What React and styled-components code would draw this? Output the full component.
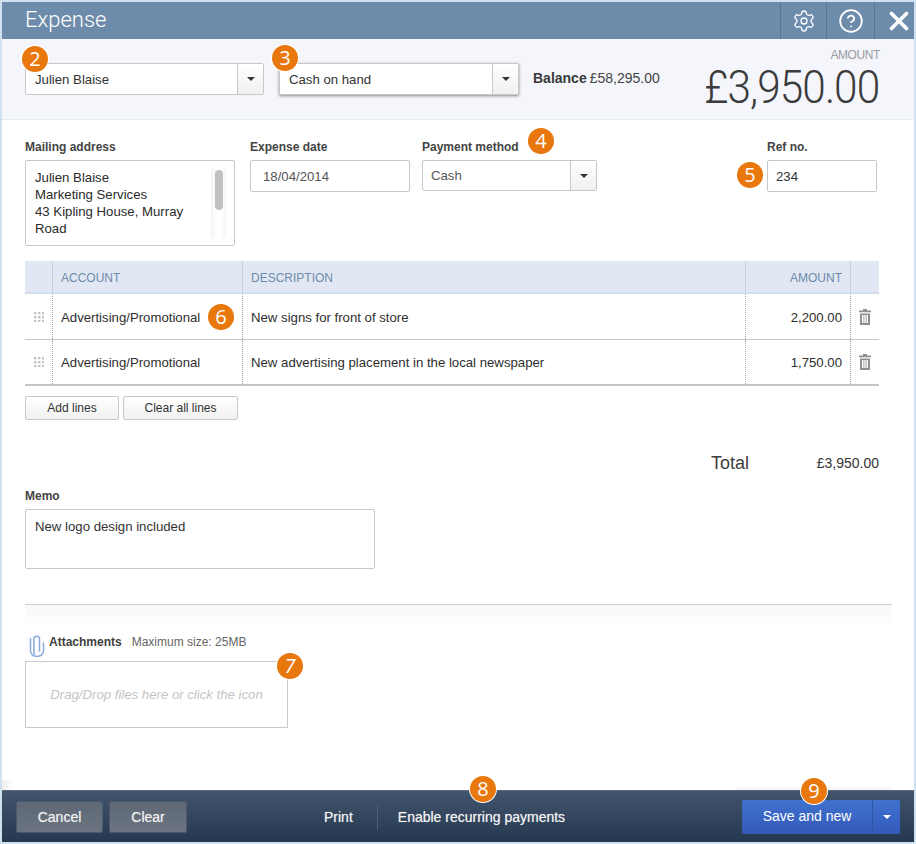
import React from "react";
import styled, { createGlobalStyle } from "styled-components";
import { Settings, CircleHelp, X } from "lucide-react";

const GlobalStyle = createGlobalStyle`
  html, body {
    margin: 0;
    padding: 0;
    background: #cfe0f1;
  }
  * {
    box-sizing: border-box;
  }
`;

const Page = styled.div`
  width: 916px;
  height: 844px;
  padding: 2px;
  background: #cfe0f1;
  display: flex;
  flex-direction: column;
  font-family: "Liberation Sans", Arial, sans-serif;
  font-size: 13.2px;
  color: #333;
  overflow: hidden;
`;

const Header = styled.header`
  height: 37px;
  flex: none;
  display: flex;
  align-items: stretch;
  background: #6d8baa;
  color: #fff;
  padding-left: 23px;
`;

const Title = styled.h1`
  margin: 0;
  flex: 1;
  font-family: Roboto, sans-serif;
  font-weight: 300;
  font-size: 22px;
  line-height: 36px;
  color: #fff;
`;

const HeaderIcon = styled.div`
  width: ${(p) => p.$w}px;
  padding-left: ${(p) => p.$pl || 0}px;
  display: flex;
  align-items: center;
  justify-content: center;
  border-left: 1px solid #59758f;
`;

const TopBar = styled.section`
  height: 81px;
  flex: none;
  display: flex;
  align-items: flex-start;
  padding: 24px 34px 0 23px;
  background: #f4f6fb;
  border-bottom: 1px solid #e4e9f1;
`;

const Combo = styled.div`
  position: relative;
  width: ${(p) => p.$w}px;
  height: ${(p) => p.$h || 32}px;
  margin-right: ${(p) => p.$mr || 0}px;
  display: flex;
  background: #fff;
  border: 1px solid #c6c8cc;
  border-radius: 2px;
  box-shadow: ${(p) => (p.$raised ? "0 1px 3px rgba(0,0,0,.45)" : "none")};
`;

const ComboText = styled.div`
  flex: 1;
  padding-left: ${(p) => (p.$tall ? 8 : 9)}px;
  line-height: ${(p) => (p.$tall ? 30 : 32)}px;
  color: ${(p) => (p.$muted ? "#555" : "#333")};
`;

const ComboButton = styled.div`
  width: 26px;
  display: flex;
  align-items: center;
  justify-content: center;
  border-left: 1px solid #c6c8cc;
  background: linear-gradient(#fff, #f0f0f0);
`;

const Caret = styled.span`
  width: 0;
  height: 0;
  border-left: 4px solid transparent;
  border-right: 4px solid transparent;
  border-top: 4px solid ${(p) => p.$color || "#333"};
`;

const Balance = styled.div`
  padding-top: 7px;
  font-size: 14px;
  color: #444;
  b {
    color: #3a3a3a;
    margin-right: 3px;
  }
`;

const AmountBox = styled.div`
  margin-left: auto;
  margin-top: -16px;
  text-align: right;
`;

const AmountLabel = styled.div`
  font-size: 12px;
  line-height: 16px;
  letter-spacing: -0.4px;
  color: #9a9aa0;
`;

const AmountValue = styled.div`
  font-family: Roboto, sans-serif;
  font-weight: 300;
  font-size: 46px;
  line-height: 46px;
  letter-spacing: -1px;
  margin-top: 1px;
  margin-right: 1px;
  color: #3b3b3b;
  transform: scaleX(0.92);
  transform-origin: right center;
`;

const Main = styled.main`
  flex: 1;
  min-height: 0;
  background: #fff;
  padding: 20px 35px 0 23px;
  display: flex;
  flex-direction: column;
`;

const FormRow = styled.div`
  display: flex;
  align-items: flex-start;
`;

const Field = styled.div`
  position: relative;
  width: ${(p) => p.$w}px;
  margin-right: ${(p) => p.$mr || 0}px;
  margin-left: ${(p) => p.$ml || 0}px;
`;

const Label = styled.label`
  display: block;
  height: 20px;
  line-height: 14px;
  font-size: 12px;
  font-weight: 700;
  color: #444;
`;

const Box = styled.div`
  height: ${(p) => p.$h}px;
  border: 1px solid #c6c8cc;
  border-radius: 2px;
  padding: ${(p) => p.$pad || "0 8px"};
  line-height: ${(p) => p.$lh || 32}px;
  color: ${(p) => p.$color || "#333"};
  background: #fff;
`;

const AddressBox = styled(Box)`
  position: relative;
  line-height: 17px;
  padding: 8px 0 0 9px;
  color: #2b2b2b;
`;

const ScrollTrack = styled.div`
  position: absolute;
  top: 7px;
  right: 8px;
  bottom: 7px;
  width: 15px;
  background: linear-gradient(90deg, #f4f4f4, #fff 40%, #fff 70%, #f4f4f4);
`;

const ScrollThumb = styled.div`
  width: 8px;
  height: 40px;
  margin: 2px 0 0 4px;
  border-radius: 4px;
  background: #c1c1c1;
`;

const Badge = styled.span`
  position: absolute;
  left: ${(p) => p.$x}px;
  top: ${(p) => p.$y}px;
  width: 26px;
  height: 26px;
  border-radius: 50%;
  background: #e8770d;
  box-shadow: 0 0 0 1px #fff;
  color: #fff;
  font-family: "Open Sans", sans-serif;
  font-size: 20px;
  font-weight: 400;
  line-height: 26px;
  text-align: center;
  z-index: 2;
`;

const Table = styled.div`
  margin-top: 15px;
  display: flex;
  flex-direction: column;
`;

const Row = styled.div`
  display: grid;
  grid-template-columns: 27px 190px 503px 105px 29px;
  height: ${(p) => p.$h}px;
  background: ${(p) => (p.$head ? "#e1e8f3" : "#fff")};
  border-bottom: ${(p) => p.$line || "1px solid #c8c8c8"};
`;

const Cell = styled.div`
  position: relative;
  display: flex;
  align-items: center;
  justify-content: ${(p) => (p.$center ? "center" : p.$right ? "flex-end" : "flex-start")};
  padding: ${(p) => (p.$center ? "0" : `${p.$pt || 0}px 8px 0`)};
  border-left: ${(p) => (p.$first ? "none" : "1px dotted #a8a8a8")};
  color: #2e2e2e;
`;

const HeadCell = styled(Cell)`
  padding-top: 2px;
  border-left: ${(p) => (p.$first ? "none" : "1px solid #c3d1e4")};
  font-size: 12px;
  color: #6d8aac;
`;

const ButtonRow = styled.div`
  display: flex;
  gap: 4px;
  margin-top: 10px;
`;

const LightButton = styled.button`
  height: 24px;
  width: ${(p) => p.$w}px;
  padding: 0;
  border: 1px solid #c6c8cc;
  border-radius: 2px;
  background: linear-gradient(#fff, #f1f1f1);
  font: 12px "Liberation Sans", Arial, sans-serif;
  color: #333;
`;

const TotalRow = styled.div`
  display: flex;
  align-items: center;
  height: 20px;
  margin-top: 33px;
  padding-left: 686px;
`;

const TotalLabel = styled.span`
  font-size: 18px;
  color: #3c3c3c;
`;

const TotalValue = styled.span`
  margin-left: auto;
  font-size: 14px;
  color: #333;
`;

const MemoField = styled.div`
  width: 350px;
  margin-top: 16px;
`;

const Attachments = styled.section`
  margin: 35px -13px 0 0;
  padding-top: 28px;
  border-top: 1px solid #cfcfcf;
  background: linear-gradient(#f8f8f8, #fff 24px);
`;

const AttachHead = styled.div`
  display: flex;
  align-items: flex-start;
  height: 28px;
  padding-left: 4px;
`;

const AttachTitle = styled.b`
  font-size: 12px;
  line-height: 18px;
  margin-left: 4px;
  color: #3f3f3f;
`;

const AttachHint = styled.span`
  font-size: 12px;
  line-height: 18px;
  margin-left: 10px;
  color: #666;
`;

const DropZone = styled.div`
  position: relative;
  width: 263px;
  height: 67px;
  border: 1px solid #c9c9c9;
  text-align: center;
  line-height: 65px;
  font-size: 13.2px;
  font-style: italic;
  color: #c4c4c4;
`;

const Footer = styled.footer`
  position: relative;
  height: 52px;
  flex: none;
  display: flex;
  align-items: center;
  padding: 0 14px;
  background: linear-gradient(#42556c, #24384f);
  border-top: 1px solid #5a6a7e;
  color: #fff;

  &::before {
    content: "";
    position: absolute;
    left: 0;
    top: -11px;
    width: 11px;
    height: 10px;
    background: linear-gradient(90deg, #eeeeee, #fff);
  }
  &::after {
    content: "";
    position: absolute;
    left: 734px;
    top: -6px;
    width: 156px;
    height: 5px;
    background: linear-gradient(#fff, #f3f3f3);
  }
`;

const DarkButton = styled.button`
  width: ${(p) => p.$w}px;
  height: 32px;
  margin-right: ${(p) => p.$mr || 0}px;
  padding: 0;
  border: 1px solid #4a5a6c;
  border-radius: 2px;
  background: linear-gradient(#5e6876, #6b7480);
  color: #f2f2f2;
  font: 14px "Liberation Sans", Arial, sans-serif;
  text-shadow: 0 0 1px rgba(255,255,255,.5);
`;

const FooterLink = styled.span`
  margin-left: ${(p) => p.$ml}px;
  font-size: 14px;
  color: #f5f5f5;
  text-shadow: 0 0 1px rgba(255,255,255,.5);
`;

const FooterRule = styled.span`
  width: 1px;
  height: 26px;
  margin-left: 24px;
  background: #4f6176;
`;

const SaveGroup = styled.div`
  margin-left: auto;
  width: 158px;
  height: 34px;
  display: flex;
  border-radius: 2px;
  background: linear-gradient(#3f72cf, #3459ba);
  color: #fff;
`;

const SaveLabel = styled.div`
  flex: 1;
  text-align: center;
  line-height: 33px;
  font-size: 14px;
`;

const SaveCaret = styled.div`
  width: 28px;
  display: flex;
  align-items: center;
  justify-content: center;
  border-left: 1px solid #2f55a8;
`;

const Grip = () => (
  <svg width="10" height="10" viewBox="0 0 10 10" fill="#c4c4c4">
    {[0, 4, 8].map((y) =>
      [0, 4, 8].map((x) => <rect key={`${x}-${y}`} x={x} y={y} width="2.4" height="2.4" />)
    )}
  </svg>
);

const Trash = () => (
  <svg width="12" height="16" viewBox="0 0 12 16" fill="#8f8f8f">
    <path d="M4 0h4v1.5h4v1.8H0V1.500h4z" />
    <path d="M1 4.500h10V16H1zM3 6v8h1.500V6zm2.300 0v8h1.400V6zM7.500 6v8H9V6z" fillRule="evenodd" />
  </svg>
);

const Clip = () => (
  <svg width="16" height="24" viewBox="0 0 16 24" fill="none" stroke="#8aa9dd" strokeWidth="1.500" strokeLinecap="round">
    <path d="M10.500 18V6a2.800 2.800 0 0 0-5.600 0v13a2.400 2.400 0 0 0 .8 2" />
    <path d="M1.500 5.500V18a6 5 0 0 0 13 0v-8" />
  </svg>
);

const lines = [
  { id: 1, description: "New signs for front of store", amount: "2,200.00", h: 46, pt: 1 },
  { id: 2, description: "New advertising placement in the local newspaper", amount: "1,750.00", h: 46, line: "2px solid #c4c4c4" },
];

const App = () => {
  return (
    <Page>
      <GlobalStyle />
      <Header>
        <Title>Expense</Title>
        <HeaderIcon $w={46}>
          <Settings size={24} strokeWidth={1.3} />
        </HeaderIcon>
        <HeaderIcon $w={48}>
          <CircleHelp size={26} strokeWidth={1.6} />
        </HeaderIcon>
        <HeaderIcon $w={40} $pl={8}>
          <X size={30} strokeWidth={3} />
        </HeaderIcon>
      </Header>

      <TopBar>
        <Combo $w={239} $mr={15}>
          <Badge $x={-4} $y={-18}>2</Badge>
          <ComboText>Julien Blaise</ComboText>
          <ComboButton><Caret /></ComboButton>
        </Combo>
        <Combo $w={240} $mr={14} $raised>
          <Badge $x={-8} $y={-19}>3</Badge>
          <ComboText>Cash on hand</ComboText>
          <ComboButton><Caret /></ComboButton>
        </Combo>
        <Balance><b>Balance</b>£58,295.00</Balance>
        <AmountBox>
          <AmountLabel>AMOUNT</AmountLabel>
          <AmountValue>£3,950.00</AmountValue>
        </AmountBox>
      </TopBar>

      <Main>
        <FormRow>
          <Field $w={210} $mr={15}>
            <Label>Mailing address</Label>
            <AddressBox $h={86}>
              Julien Blaise<br />
              Marketing Services<br />
              43 Kipling House, Murray<br />
              Road
              <ScrollTrack><ScrollThumb /></ScrollTrack>
            </AddressBox>
          </Field>
          <Field $w={160} $mr={12}>
            <Label>Expense date</Label>
            <Box $h={32} $pad="0 12px" $color="#555">18/04/2014</Box>
          </Field>
          <Field $w={175}>
            <Label>Payment method</Label>
            <Badge $x={106} $y={-12}>4</Badge>
            <Combo $w={175} $h={31}>
              <ComboText $tall $muted>Cash</ComboText>
              <ComboButton><Caret /></ComboButton>
            </Combo>
          </Field>
          <Field $w={110} $ml={170}>
            <Label>Ref no.</Label>
            <Badge $x={-30} $y={22}>5</Badge>
            <Box $h={32}>234</Box>
          </Field>
        </FormRow>

        <Table>
          <Row $head $h={33} $line="2px solid #d3deec">
            <HeadCell $first />
            <HeadCell>ACCOUNT</HeadCell>
            <HeadCell>DESCRIPTION</HeadCell>
            <HeadCell $right>AMOUNT</HeadCell>
            <HeadCell />
          </Row>
          {lines.map((line, i) => (
            <Row key={line.id} $h={line.h} $line={line.line}>
              <Cell $first $center><Grip /></Cell>
              <Cell $pt={line.pt}>
                Advertising/Promotional
                {i === 0 && <Badge $x={155} $y={10}>6</Badge>}
              </Cell>
              <Cell $pt={line.pt}>{line.description}</Cell>
              <Cell $right $pt={line.pt}>{line.amount}</Cell>
              <Cell $center><Trash /></Cell>
            </Row>
          ))}
        </Table>

        <ButtonRow>
          <LightButton $w={94}>Add lines</LightButton>
          <LightButton $w={115}>Clear all lines</LightButton>
        </ButtonRow>

        <TotalRow>
          <TotalLabel>Total</TotalLabel>
          <TotalValue>£3,950.00</TotalValue>
        </TotalRow>

        <MemoField>
          <Label>Memo</Label>
          <Box $h={60} $pad="8px 9px" $lh={17}>New logo design included</Box>
        </MemoField>

        <Attachments>
          <AttachHead>
            <Clip />
            <AttachTitle>Attachments</AttachTitle>
            <AttachHint>Maximum size: 25MB</AttachHint>
          </AttachHead>
          <DropZone>
            Drag/Drop files here or click the icon
            <Badge $x={251} $y={-9}>7</Badge>
          </DropZone>
        </Attachments>
      </Main>

      <Footer>
        <DarkButton $w={87} $mr={6}>Cancel</DarkButton>
        <DarkButton $w={78}>Clear</DarkButton>
        <FooterLink $ml={137}>Print</FooterLink>
        <FooterRule />
        <FooterLink $ml={20}>Enable recurring payments</FooterLink>
        <Badge $x={468} $y={-15}>8</Badge>
        <SaveGroup>
          <SaveLabel>Save and new</SaveLabel>
          <SaveCaret><Caret $color="#fff" /></SaveCaret>
        </SaveGroup>
        <Badge $x={799} $y={-13}>9</Badge>
      </Footer>
    </Page>
  );
};

export default App;
